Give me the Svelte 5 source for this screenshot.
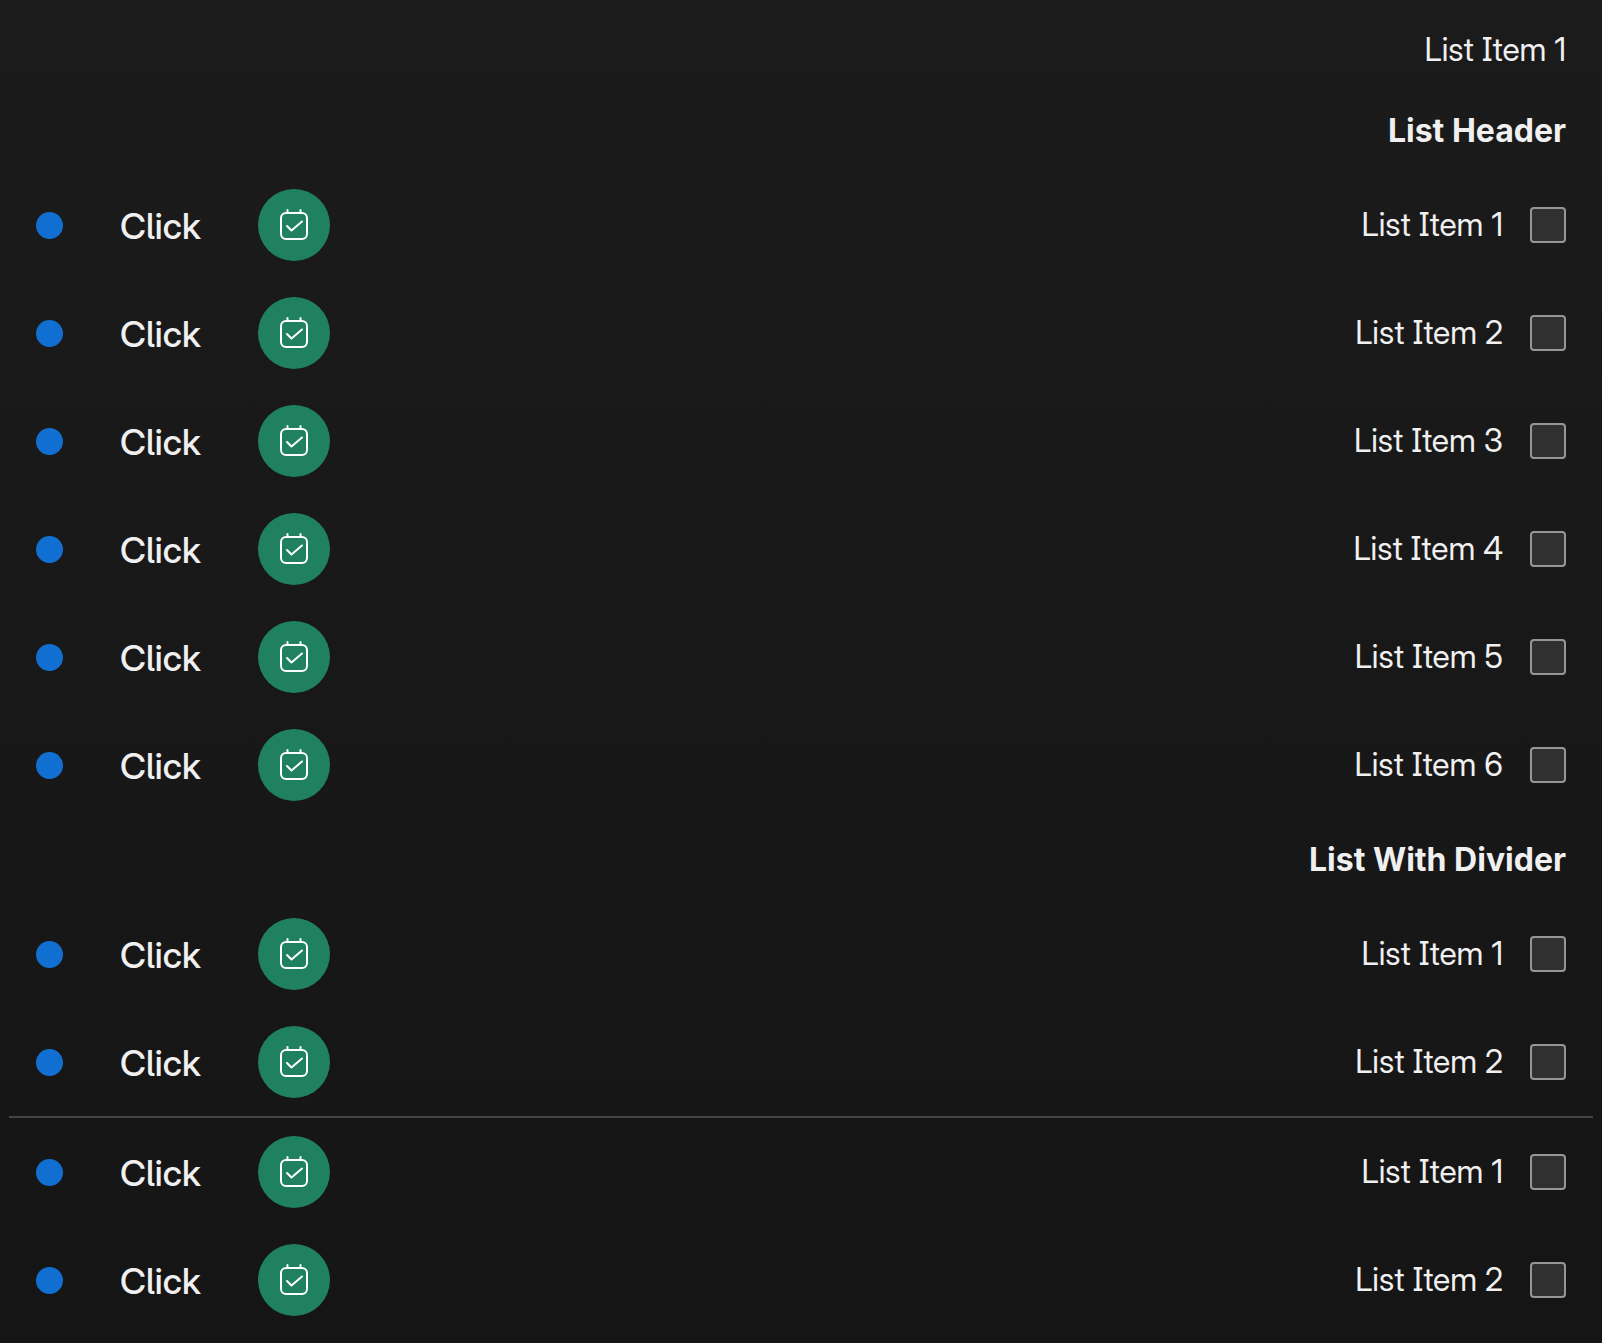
<script>
  const items = [1, 2, 3, 4, 5, 6];
  const short = [1, 2];
</script>

{#snippet row(n)}
  <li class="row">
    <label class="choice">
      <input type="checkbox" />
      <span class="label">List Item {n}</span>
    </label>
    <span class="actions">
      <span class="avatar">
        <svg viewBox="0 0 32 32" fill="none" stroke="#fff" stroke-width="2" aria-hidden="true">
          <rect x="3" y="4" width="26" height="26" rx="5" />
          <path d="M9.500 4V1M22.500 4V1" />
          <path d="M9 17l4.500 4.500L24 12.500" />
        </svg>
      </span>
      <button type="button" class="click">Click</button>
      <span class="dot"></span>
    </span>
  </li>
{/snippet}

<main dir="rtl">
  <p class="text">List Item 1</p>
  <h2 class="text">List Header</h2>
  <ul>
    {#each items as n}{@render row(n)}{/each}
  </ul>
  <h2 class="text">List With Divider</h2>
  <ul>
    {#each short as n}{@render row(n)}{/each}
  </ul>
  <hr />
  <ul>
    {#each short as n}{@render row(n)}{/each}
  </ul>
</main>

<style>
  :global(body) {
    margin: 0;
    background: #151515;
  }
  main {
    padding: 9px 0;
    background: linear-gradient(#1b1b1b, #151515);
    color: #f0f0f0;
    font-family: Inter, sans-serif;
    font-feature-settings: 'ss02';
    font-variation-settings: 'opsz' 32;
    font-size: 32px;
    line-height: 45px;
  }
  .text {
    margin: 0;
    padding: 18px 36px;
    font-size: 32px;
  }
  h2 {
    font-family: Inter, sans-serif;
    font-variation-settings: 'opsz' 14;
    font-weight: 700;
  }
  p,
  .label {
    font-family: 'Inter Display', Inter, sans-serif;
  }
  .label {
    padding-bottom: 2px;
  }
  ul {
    margin: 0;
    padding: 0;
    list-style: none;
  }
  .row {
    display: flex;
    align-items: center;
    justify-content: space-between;
    padding: 18px 36px;
  }
  .choice,
  .actions {
    display: flex;
    align-items: center;
    gap: 27px;
  }
  input {
    appearance: none;
    box-sizing: border-box;
    width: 36px;
    height: 36px;
    margin: 0;
    border: 2px solid #969696;
    border-radius: 4px;
    background: #303030;
  }
  .avatar {
    display: flex;
    align-items: center;
    justify-content: center;
    width: 72px;
    height: 72px;
    border-radius: 50%;
    background: #1f815f;
  }
  svg {
    width: 32px;
    height: 32px;
    stroke-linecap: round;
    stroke-linejoin: round;
  }
  .click {
    padding: 2px 30px 0;
    border: 0;
    background: none;
    color: inherit;
    font: inherit;
    font-family: 'Inter Display', Inter, sans-serif;
    font-feature-settings: 'ss02';
    font-variation-settings: 'opsz' 32;
    font-size: 36px;
    font-weight: 500;
  }
  .dot {
    width: 27px;
    height: 27px;
    border-radius: 50%;
    background: #116fd2;
  }
  hr {
    height: 2px;
    margin: 0 9px;
    border: 0;
    background: #444;
  }
</style>
